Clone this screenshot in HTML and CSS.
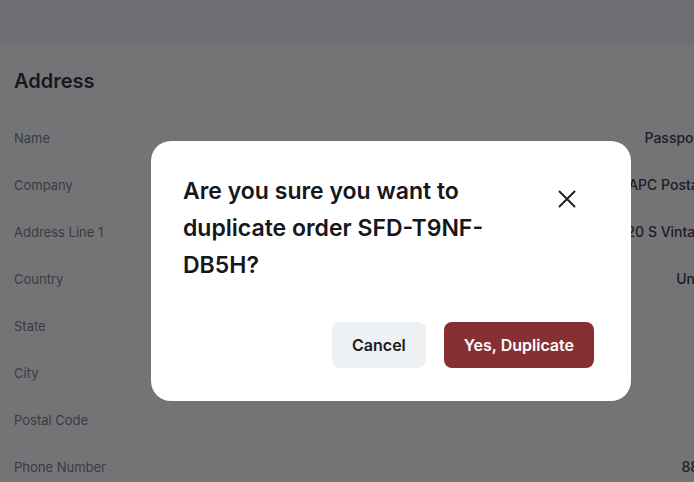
FILE: index.html
```html
<!DOCTYPE html>
<html lang="en">
<head>
<meta charset="utf-8">
<title>Duplicate order</title>
<link rel="stylesheet" href="styles.css">
</head>
<body>
<div class="page">
  <header class="topbar"></header>
  <section class="section">
    <h2 class="section-title">Address</h2>
    <dl class="details">
      <div class="row"><dt>Name</dt><dd>Passport Services</dd></div>
      <div class="row"><dt>Company</dt><dd>SAPC Postal Logistics</dd></div>
      <div class="row"><dt>Address Line 1</dt><dd>1220 S Vintage Avenue</dd></div>
      <div class="row"><dt>Country</dt><dd>United States</dd></div>
      <div class="row"><dt>State</dt><dd>CA</dd></div>
      <div class="row"><dt>City</dt><dd>Ontario</dd></div>
      <div class="row"><dt>Postal Code</dt><dd>91761</dd></div>
      <div class="row"><dt>Phone Number</dt><dd>8885550147</dd></div>
    </dl>
  </section>
</div>

<div class="overlay">
  <div class="modal" role="dialog" aria-modal="true">
    <div class="modal-head">
      <h3 class="modal-title">Are you sure you want to duplicate order SFD-T9NF-DB5H?</h3>
      <button class="close" aria-label="Close">
        <svg width="24" height="24" viewBox="0 0 24 24" fill="none" stroke="currentColor" stroke-width="1.9" stroke-linecap="round"><path d="M4.5 4.5l15 15M19.5 4.5l-15 15"/></svg>
      </button>
    </div>
    <div class="modal-actions">
      <button class="btn btn-cancel">Cancel</button>
      <button class="btn btn-primary">Yes, Duplicate</button>
    </div>
  </div>
</div>
</body>
</html>
```
FILE: styles.css
```css
html, body {
  margin: 0;
  padding: 0;
  overflow: hidden;
}
body {
  font-family: Inter, "Noto Sans", sans-serif;
  background: #ffffff;
  width: 694px;
  height: 482px;
}
.page {
  width: 782px;
}
.topbar {
  height: 45px;
  background: #f1f2f4;
}
.section {
  padding: 24px 16px 0 14px;
}
.section-title {
  margin: 0;
  font-size: 20px;
  line-height: 24px;
  font-weight: 600;
  color: #111827;
}
.details {
  margin: 21px 0 0;
}
.row {
  display: flex;
  justify-content: space-between;
  align-items: center;
  height: 47px;
}
.row dt {
  font-size: 13px;
  color: #6b7280;
}
.row dd {
  margin: 0;
  font-size: 14px;
  color: #1f2937;
  font-weight: 500;
  white-space: nowrap;
}
.overlay {
  position: fixed;
  left: 0;
  top: 0;
  width: 782px;
  height: 542px;
  background: rgba(24, 24, 27, 0.6);
  display: flex;
  align-items: center;
  justify-content: center;
}
.modal {
  width: 480px;
  box-sizing: border-box;
  padding: 32px 37px 33px 32px;
  background: #ffffff;
  border-radius: 20px;
}
.modal-head {
  display: flex;
  justify-content: space-between;
  align-items: flex-start;
}
.modal-title {
  margin: 0;
  max-width: 350px;
  font-size: 23px;
  line-height: 37px;
  font-weight: 600;
  color: #16161d;
}
.close {
  margin-top: 14px;
  margin-right: 15px;
  padding: 0;
  border: 0;
  background: none;
  color: #1c1c22;
  width: 24px;
  height: 24px;
  display: flex;
}
.modal-actions {
  display: flex;
  justify-content: flex-end;
  gap: 18px;
  margin-top: 38px;
}
.btn {
  font-family: Inter, "Noto Sans", sans-serif;
  font-size: 16px;
  font-weight: 600;
  line-height: 22px;
  padding: 12px 20px;
  border: 0;
  border-radius: 8px;
}
.btn-cancel {
  background: #eef1f3;
  color: #1a1a22;
}
.btn-primary {
  background: #873034;
  color: #ffffff;
}
```
